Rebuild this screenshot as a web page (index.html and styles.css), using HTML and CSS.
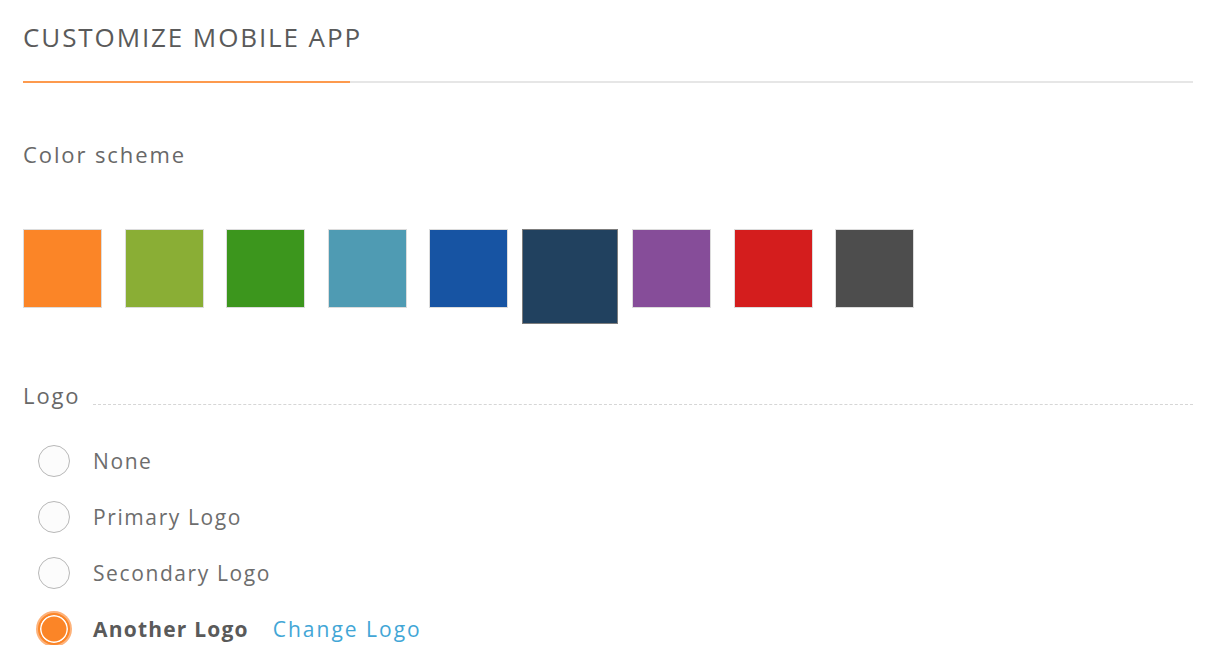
FILE: index.html
```html
<!DOCTYPE html>
<html>
<head>
<meta charset="utf-8">
<link rel="stylesheet" href="styles.css">
</head>
<body>
<div class="panel">
  <div class="header">
    <h1 class="title">CUSTOMIZE MOBILE APP</h1>
  </div>
  <div class="tabline"><div class="tab-active"></div><div class="tab-rest"></div></div>

  <div class="section-label color-label">Color scheme</div>
  <div class="swatches">
    <div class="swatch c-orange"></div>
    <div class="swatch c-olive"></div>
    <div class="swatch c-green"></div>
    <div class="swatch c-teal"></div>
    <div class="swatch c-blue"></div>
    <div class="swatch c-navy selected"></div>
    <div class="swatch c-purple"></div>
    <div class="swatch c-red"></div>
    <div class="swatch c-gray"></div>
  </div>

  <div class="logo-head">
    <span class="section-label">Logo</span>
    <span class="dash"></span>
  </div>
  <div class="radios">
    <div class="radio-row"><span class="radio"></span><span class="radio-text">None</span></div>
    <div class="radio-row"><span class="radio"></span><span class="radio-text">Primary Logo</span></div>
    <div class="radio-row"><span class="radio"></span><span class="radio-text">Secondary Logo</span></div>
    <div class="radio-row"><span class="radio checked"></span><span class="radio-text strong">Another Logo</span><a class="link">Change Logo</a></div>
  </div>
</div>
</body>
</html>
```

FILE: styles.css
```css
html, body {
  margin: 0;
  padding: 0;
  background: #ffffff;
}
body {
  font-family: "Open Sans", "Lato", sans-serif;
  color: #6f6f6f;
}
.panel {
  padding: 0 15px 0 23px;
}
.header {
  padding-top: 19px;
  height: 60px;
  box-sizing: border-box;
}
.title {
  margin: 0;
  font-size: 26px;
  line-height: 36px;
  font-weight: 500;
  letter-spacing: 1.9px;
  color: #5a5a5a;
}
.tabline {
  display: flex;
  height: 2px;
  margin-top: 21px;
}
.tab-active {
  width: 327px;
  background: #fd9a4d;
}
.tab-rest {
  flex: 1;
  background: #e6e6e6;
}
.section-label {
  font-size: 22px;
  line-height: 28px;
  letter-spacing: 1.9px;
  color: #686868;
}
.color-label {
  margin-top: 57px;
}
.swatches {
  display: flex;
  align-items: flex-start;
  gap: 22.5px;
  margin-top: 61px;
}
.swatch {
  width: 79px;
  height: 79px;
  box-sizing: border-box;
  border: 1px solid #dcdcdc;
}
.swatch.selected {
  width: 96px;
  height: 95px;
  margin: 0 -8.5px;
  border: 1.5px solid #7d7d7d;
}
.c-orange { background: #fb8527; }
.c-olive { background: #8aae35; }
.c-green { background: #3c961d; }
.c-teal { background: #4f9bb3; }
.c-blue { background: #1754a3; }
.c-navy { background: #21415f; }
.c-purple { background: #864d99; }
.c-red { background: #d41d1d; }
.c-gray { background: #4d4d4d; }

.logo-head {
  display: flex;
  align-items: flex-end;
  gap: 12px;
  margin-top: 57px;
}
.dash {
  flex: 1;
  border-bottom: 1px dashed #d6d6d6;
  margin-bottom: 4px;
}
.radios {
  display: flex;
  flex-direction: column;
  gap: 24px;
  margin-top: 36px;
  padding-left: 15px;
}
.radio-row {
  display: flex;
  align-items: center;
  height: 32px;
}
.radio {
  width: 32px;
  height: 32px;
  box-sizing: border-box;
  border-radius: 50%;
  border: 1.5px solid #b8b8b8;
  background: #fcfcfc;
  margin-right: 23px;
  flex: none;
}
.radio.checked {
  border: 2px solid #fb8527;
  background: #fb8527;
  box-shadow: inset 0 0 0 1.5px #ffffff, 0 0 0 2px #fdb27a;
}
.radio-text {
  font-size: 21px;
  letter-spacing: 1.6px;
  color: #6d6d6d;
}
.radio-text.strong {
  font-weight: 700;
  letter-spacing: 1.2px;
  color: #5a5a5a;
}
.link {
  margin-left: 24px;
  font-size: 21px;
  letter-spacing: 2px;
  color: #42a6d6;
  cursor: pointer;
}
```
